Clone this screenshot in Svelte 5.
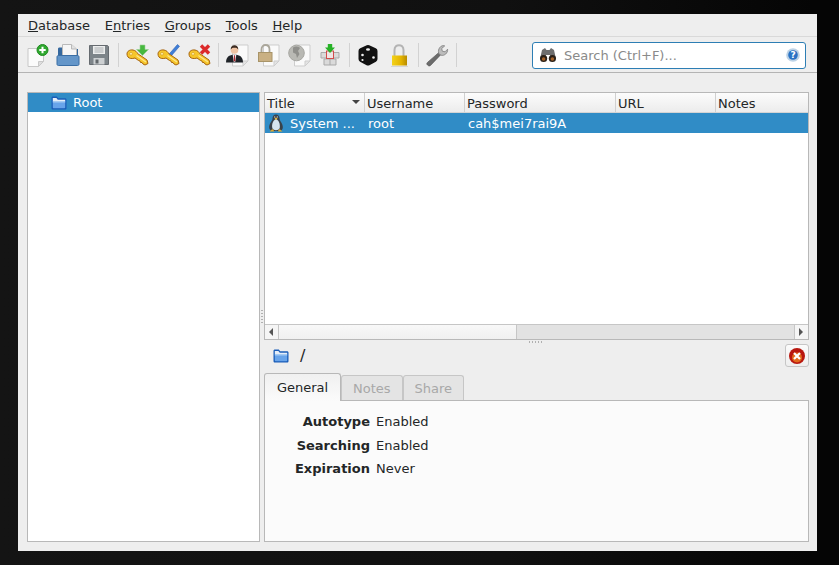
<script lang="ts">
  const menus = [
    { key: 'D', rest: 'atabase' },
    { pre: 'E', key: 'n', rest: 'tries' },
    { key: 'G', rest: 'roups' },
    { key: 'T', rest: 'ools' },
    { key: 'H', rest: 'elp' },
  ];
  const columns = [
    { name: 'Title', width: 100, sort: true },
    { name: 'Username', width: 100 },
    { name: 'Password', width: 151 },
    { name: 'URL', width: 100 },
    { name: 'Notes', width: 93 },
  ];
  const details = [
    ['Autotype', 'Enabled'],
    ['Searching', 'Enabled'],
    ['Expiration', 'Never'],
  ];
</script>

{#snippet folder()}
  <svg class="folder" viewBox="0 0 16 14" width="16" height="14">
    <path d="M.5 12V2C.5 1 1 .5 2 .5h3.800l1.400 1.700H14c1 0 1.500.5 1.500 1.500V12c0 1-.5 1.500-1.500 1.500H2C1 13.500.5 13 .5 12z" fill="#1a5db8" />
    <path d="M1.800 2h3.600l1.400 1.700h7.400v1.300H1.800z" fill="#e6eef8" />
    <path d="M1.800 5h12.400v6.500c0 .5-.3.800-.8.800H2.600c-.5 0-.8-.3-.8-.8z" fill="#68a4ea" />
    <path d="M1.800 5h12.400v1.500H1.800z" fill="#a5cbf3" />
  </svg>
{/snippet}

{#snippet key(extra)}
  <svg viewBox="0 0 24 24" width="24" height="24">
    {@render extra()}
    <path d="M2 11C2 8 5 6.500 8 7c2.500.5 4 2 4.500 3.500L22 17l1 3.500-3 1.500-2-1-1-1.500h-1.500l-.5-1.500-1.500-.5L10 15c-3 1-6 .5-7-1-.7-1-1-2-1-3z" fill="#f6c62a" stroke="#a8640c" stroke-width="1" stroke-linejoin="round" />
    <path d="M11.500 12.500l9.500 6.500" stroke="#fde78f" stroke-width="1.200" />
    <circle cx="6" cy="10.800" r="1.400" fill="#fff1a8" stroke="#c58a14" stroke-width=".5" />
  </svg>
{/snippet}

{#snippet page(inner)}
  <svg viewBox="0 0 24 24" width="24" height="24">
    <path d="M7.500 2h15.500v16l-5 5H7.500z" fill="#fafafa" stroke="#cdcdcd" />
    <path d="M23 18h-5v5z" fill="#e4e4e4" stroke="#cdcdcd" />
    {@render inner()}
  </svg>
{/snippet}

<div class="window">
  <nav class="menubar">
    {#each menus as m}
      <span class="menu">{m.pre ?? ''}<u>{m.key}</u>{m.rest}</span>
    {/each}
  </nav>

  <div class="toolbar">
    <span class="tool">
      <svg viewBox="0 0 24 24" width="24" height="24">
        <path d="M3 5.500h15.500v13l-5 5H3z" fill="#fbfbfb" stroke="#c8c8c8" />
        <path d="M18.500 18.500l-5 5v-5z" fill="#dedede" stroke="#c8c8c8" />
        <circle cx="17.500" cy="7" r="5.500" fill="#2fa82f" stroke="#1f8a1f" />
        <path d="M17.500 3.800v6.400M14.300 7h6.400" stroke="#fff" stroke-width="2" />
      </svg>
    </span>
    <span class="tool">
      <svg viewBox="0 0 24 24" width="24" height="24">
        <path d="M2 6c0-1 .6-1.500 1.500-1.500h3l1 1.500H22v13H2z" fill="#35689e" />
        <path d="M6.500 1.500h9l5 4.500v8h-14z" fill="#f6f6f6" stroke="#b9b9b9" />
        <path d="M15.500 1.500v4.500h5" fill="#e2e2e2" stroke="#b9b9b9" />
        <path d="M1 14c0-1 .6-1.500 1.500-1.500h19c.9 0 1.500.5 1.500 1.500v7c0 1-.6 1.500-1.500 1.500h-19C1.600 22.500 1 22 1 21z" fill="#6496c9" stroke="#3a6ea5" />
      </svg>
    </span>
    <span class="tool">
      <svg viewBox="0 0 24 24" width="24" height="24">
        <path d="M2.500 2.500h18l1 1v18h-19z" fill="#7d8489" stroke="#666b70" />
        <path d="M6 3h12v8H6z" fill="#eceded" />
        <path d="M7.500 5h9M7.500 7h9M7.500 9h9" stroke="#a9adb0" />
        <path d="M6.500 15h11v6.500h-11z" fill="#cdd0d2" />
        <path d="M8.500 16.500h3v4h-3z" fill="#63686c" />
      </svg>
    </span>
    <span class="sep"></span>
    <span class="tool">
      {#snippet down()}
        <path d="M15 2h5v4.500h3.500L17.500 12.500 11.500 6.500H15z" fill="#46b83f" stroke="#9bd196" stroke-width=".6" />
      {/snippet}
      {@render key(down)}
    </span>
    <span class="tool">
      {#snippet pencil()}
        <path d="M21.500 1.500l2 1.800-9 10.500-3 1.200 .8-3z" fill="#3f7ed8" stroke="#2b5fb0" stroke-width=".6" />
      {/snippet}
      {@render key(pencil)}
    </span>
    <span class="tool">
      {#snippet cross()}
        <path d="M14 2.500l8 8M22 2.500l-8 8" stroke="#dc2a2a" stroke-width="3.400" />
      {/snippet}
      {@render key(cross)}
    </span>
    <span class="sep"></span>
    <span class="tool">
      {#snippet user()}
        <circle cx="9.500" cy="7" r="3.800" fill="#eec3a3" />
        <path d="M5.700 6.500c0-3 1.800-4.300 3.800-4.300s3.800 1.300 3.800 4.300c-1-1.500-2-1.800-3.800-1.800S6.700 5 5.700 6.500z" fill="#3b2a20" />
        <path d="M1 19.500c0-5.500 3-7.800 8.500-7.800s8.500 2.300 8.500 7.800z" fill="#1f2328" />
        <path d="M7.700 11.700h3.600l-1 7h-1.600z" fill="#f4f4f4" />
        <path d="M9 12.300h1l.4 6h-1.800z" fill="#a8242c" />
      {/snippet}
      {@render page(user)}
    </span>
    <span class="tool">
      {#snippet padlock()}
        <path d="M5.500 10V6.500c0-6 8-6 8 0V10" fill="none" stroke="#aaa69a" stroke-width="1.800" />
        <rect x="2.500" y="9.500" width="13.500" height="9" fill="#c9b083" stroke="#a89468" />
      {/snippet}
      {@render page(padlock)}
    </span>
    <span class="tool">
      {#snippet globe()}
        <circle cx="9.500" cy="10" r="7.800" fill="#b9b9b4" stroke="#a8a8a3" />
        <path d="M6 4.500c3-2 6-1 7 .5l-2 3 1.500 3-2.500 4-1-4-3-1.500z" fill="#8f8f8b" />
      {/snippet}
      {@render page(globe)}
    </span>
    <span class="tool">
      <svg viewBox="0 0 24 24" width="24" height="24">
        <path d="M3 9.500h18v5.500H3zM6 16h12v6H6z" fill="#dadada" stroke="#a9a9a9" />
        <path d="M9 9.500v5.500M15 9.500v5.500M12 16v6" stroke="#a9a9a9" />
        <rect x="8.500" y="8" width="7" height="7.500" fill="#efe4e4" stroke="#d24b4b" />
        <path d="M9.800 1h4.400v3.500h2.800L12 10 7 4.500h2.800z" fill="#27b227" />
      </svg>
    </span>
    <span class="sep"></span>
    <span class="tool">
      <svg viewBox="0 0 24 24" width="24" height="24">
        <path d="M12 5l6.500 3v8L12 19.500 5.500 16V8z" fill="#121212" stroke="#121212" stroke-linejoin="round" stroke-width="6" />
        <g fill="#f2f2f2"><ellipse cx="12" cy="6.500" rx="2" ry="1.200" /><circle cx="6.500" cy="12" r="1.300" /><circle cx="6.500" cy="17" r="1.100" /><circle cx="17.500" cy="14.500" r="1.300" /></g>
      </svg>
    </span>
    <span class="tool">
      <svg viewBox="0 0 24 24" width="24" height="24">
        <defs>
          <linearGradient id="gold" x1="0" x2="1" y1="0" y2="0">
            <stop offset="0" stop-color="#f3d21a" />
            <stop offset="0.6" stop-color="#e4b400" />
            <stop offset="1" stop-color="#b88c00" />
          </linearGradient>
        </defs>
        <path d="M7.500 13V7c0-6.500 9-6.500 9 0v6" fill="none" stroke="#b4b4b4" stroke-width="2" />
        <rect x="5" y="12.500" width="15" height="10" fill="url(#gold)" />
        <rect x="4" y="23" width="17" height="1" fill="#d4d4d4" />
      </svg>
    </span>
    <span class="sep"></span>
    <span class="tool">
      <svg viewBox="0 0 24 24" width="24" height="24">
        <path d="M2.500 22c-1-1-.8-1.800 0-2.600l11.500-10 2 2-10.500 11c-1 .9-2 .6-3-.4z" fill="#6c6c6c" stroke="#565656" stroke-width=".7" />
        <path d="M14 11c-1.500-3 0-8 4.500-8.500l1.200.4-3 2.600.6 2.700 2.700.6 2.600-2.600c.4 4-3.500 7-6.500 6z" fill="#bcbcbc" stroke="#7c7c7c" stroke-width=".8" />
      </svg>
    </span>
    <span class="sep"></span>
    <label class="search">
      <svg viewBox="0 0 18 18" width="18" height="18">
        <path d="M3 4l3-2 1.500 2h3L12 2l3 2 2 9h-6V9H7v4H1z" fill="#6e6e6e" />
        <circle cx="4.600" cy="12.500" r="3.600" fill="#2b2118" />
        <circle cx="13.400" cy="12.500" r="3.600" fill="#2b2118" />
        <circle cx="4.600" cy="13" r="1.800" fill="#a4622a" />
        <circle cx="13.400" cy="13" r="1.800" fill="#a4622a" />
      </svg>
      <span class="placeholder">Search (Ctrl+F)...</span>
      <svg class="help" viewBox="0 0 14 14" width="14" height="14">
        <circle cx="7" cy="7" r="6.800" fill="#bcd2e6" />
        <circle cx="7" cy="7" r="4.800" fill="#2a72c4" />
        <text x="7" y="10.200" text-anchor="middle" font-size="9" font-weight="700" fill="#fff">?</text>
      </svg>
    </label>
  </div>

  <div class="content">
    <aside class="tree">
      <div class="tree-row">
        {@render folder()}
        <span>Root</span>
      </div>
    </aside>

    <div class="split-v"><span class="dots-v"></span></div>

    <section class="main">
      <div class="table">
        <div class="thead">
          {#each columns as c}
            <div class="th" style="width: {c.width}px">
              {c.name}
              {#if c.sort}<span class="sort"></span>{/if}
            </div>
          {/each}
        </div>
        <div class="row">
          <div class="td title" style="width: {columns[0].width}px">
            <svg viewBox="0 0 16 18" width="16" height="18">
              <path d="M8 .5c2.500 0 3.500 2 3.500 4 0 2.500 3.800 5 3.300 9.500-.2 1.500-1.500 2.500-2.500 3H3.700c-1-.5-2.300-1.500-2.500-3C.7 9.500 4.500 7 4.500 4.500 4.500 2.500 5.500.5 8 .5z" fill="#39424a" />
              <path d="M8 5c2.600 1 4.300 4.500 3.800 8.500-.2 1.800-1.800 2.800-3.800 2.800s-3.600-1-3.800-2.800C3.700 9.500 5.400 6 8 5z" fill="#d6e5ef" />
              <path d="M6.500 4.500L8 3.500l1.500 1L8 6z" fill="#e4b53a" />
              <path d="M6.200 2.500h1v1h-1zM8.800 2.500h1v1h-1z" fill="#fff" />
              <path d="M1.500 17.500l3-2.500 2 2.500zM14.500 17.500l-3-2.500-2 2.500z" fill="#e0a92c" />
            </svg>
            <span>System ...</span>
          </div>
          <div class="td" style="width: {columns[1].width}px">root</div>
          <div class="td" style="width: {columns[2].width}px">cah$mei7rai9A</div>
        </div>
        <div class="rows-empty"></div>
        <div class="hscroll">
          <span class="arrow left"></span>
          <span class="thumb"></span>
          <span class="track"></span>
          <span class="arrow right"></span>
        </div>
      </div>

      <div class="split-h"><span class="dots-h"></span></div>

      <div class="path">
        {@render folder()}
        <span class="slash">/</span>
        <button class="close" aria-label="Close">
          <svg viewBox="0 0 18 18" width="18" height="18">
            <circle cx="9" cy="9" r="8" fill="#b9170f" />
            <circle cx="9" cy="10.500" r="5" fill="#e2691b" />
            <path d="M6 6l6 6M12 6l-6 6" stroke="#fff" stroke-width="2.200" />
          </svg>
        </button>
      </div>

      <div class="tabs">
        <span class="tab active">General</span>
        <span class="tab">Notes</span>
        <span class="tab">Share</span>
      </div>
      <div class="pane">
        {#each details as [label, value]}
          <div class="detail">
            <b>{label}</b>
            <span>{value}</span>
          </div>
        {/each}
      </div>
    </section>
  </div>
</div>

<style>
  :global(body) {
    background: linear-gradient(90deg, #141414, #101010 60%, #050505 97%);
    height: 565px;
    overflow: hidden;
  }
  .window {
    box-sizing: border-box;
    width: 799px;
    height: 537px;
    margin: 14px 0 0 18px;
    display: flex;
    flex-direction: column;
    background: #eeeeee;
    color: #232627;
    font: 13px "DejaVu Sans", sans-serif;
  }
  .menubar {
    height: 22px;
    display: flex;
    align-items: center;
    gap: 14.700px;
    padding-left: 10px;
    border-bottom: 1px solid #d9d9d9;
    flex: none;
  }
  .toolbar {
    height: 35px;
    display: flex;
    align-items: center;
    padding-left: 3.500px;
    border-bottom: 1px solid #b4b4b4;
    flex: none;
  }
  .tool {
    width: 31px;
    height: 24px;
    display: flex;
    justify-content: center;
  }
  .sep {
    width: 7px;
    height: 24px;
    display: flex;
    justify-content: center;
  }
  .sep::before {
    content: '';
    width: 1px;
    background: #d2d2d2;
  }
  .search {
    box-sizing: border-box;
    width: 274px;
    height: 27px;
    margin: 1px 11px 0 auto;
    display: flex;
    align-items: center;
    gap: 7px;
    padding: 0 5px 0 6px;
    background: #fff;
    border: 1px solid #2d7eb4;
    border-radius: 3px;
  }
  .placeholder {
    color: #8a8a8a;
    flex: 1;
  }
  .content {
    flex: 1;
    min-height: 0;
    display: flex;
    padding: 19px 8px 9px 9px;
  }
  .tree {
    box-sizing: border-box;
    width: 233px;
    background: #fff;
    border: 1px solid #b8b8b8;
    flex: none;
  }
  .tree-row {
    height: 19px;
    display: flex;
    align-items: center;
    gap: 6px;
    padding-left: 23px;
    background: #308cc6;
    color: #fff;
  }
  .split-v {
    width: 4px;
    flex: none;
    display: flex;
    align-items: center;
  }
  .dots-v {
    width: 2px;
    height: 14px;
    margin-left: 1px;
    background: repeating-linear-gradient(#b0b0b0 0 1px, transparent 1px 3px);
  }
  .main {
    flex: 1;
    min-width: 0;
    display: flex;
    flex-direction: column;
  }
  .table {
    box-sizing: border-box;
    height: 248px;
    display: flex;
    flex-direction: column;
    background: #fff;
    border: 1px solid #b8b8b8;
    flex: none;
  }
  .thead {
    height: 20px;
    display: flex;
    flex: none;
    background: linear-gradient(#fcfcfc, #ececec);
    border-bottom: 1px solid #d4d4d4;
    box-sizing: border-box;
  }
  .th {
    box-sizing: border-box;
    position: relative;
    line-height: 21px;
    padding-left: 2px;
    border-right: 1px solid #d0d0d0;
    flex: none;
  }
  .th:last-child {
    border-right: 0;
  }
  .sort {
    position: absolute;
    right: 4px;
    top: 7px;
    border: 4px solid transparent;
    border-top: 4px solid #444;
    border-bottom: 0;
  }
  .row {
    height: 20px;
    display: flex;
    align-items: center;
    background: #308cc6;
    color: #fff;
    flex: none;
  }
  .td {
    box-sizing: border-box;
    padding-left: 3px;
    flex: none;
  }
  .td.title {
    display: flex;
    align-items: center;
    gap: 6px;
    padding-left: 3px;
  }
  .rows-empty {
    flex: 1;
  }
  .hscroll {
    height: 14px;
    display: flex;
    flex: none;
    border-top: 1px solid #c6c6c6;
    background: #e2e2e2;
  }
  .arrow {
    width: 14px;
    box-sizing: border-box;
    background: #f5f5f5;
    position: relative;
    flex: none;
  }
  .arrow.left {
    border-right: 1px solid #c6c6c6;
  }
  .arrow.right {
    border-left: 1px solid #c6c6c6;
  }
  .arrow::after {
    content: '';
    position: absolute;
    top: 3px;
    border: 4px solid transparent;
  }
  .arrow.left::after {
    left: 1px;
    border-right-color: #555;
    border-left: 0;
    margin-left: 3px;
  }
  .arrow.right::after {
    left: 4px;
    border-left-color: #555;
    border-right: 0;
  }
  .thumb {
    width: 237px;
    background: linear-gradient(#f8f8f8, #f0f0f0);
    border-right: 1px solid #c6c6c6;
    flex: none;
  }
  .track {
    flex: 1;
  }
  .split-h {
    height: 4px;
    flex: none;
    display: flex;
    justify-content: center;
  }
  .dots-h {
    width: 14px;
    height: 2px;
    margin-top: 1px;
    margin-left: -1px;
    background: repeating-linear-gradient(90deg, #b0b0b0 0 1px, transparent 1px 3px);
  }
  .path {
    height: 23px;
    display: flex;
    align-items: center;
    padding-left: 9px;
    flex: none;
  }
  .slash {
    margin-left: 11px;
    font-size: 16px;
  }
  .close {
    box-sizing: border-box;
    width: 24px;
    height: 23px;
    margin-left: auto;
    padding: 0;
    display: flex;
    align-items: center;
    justify-content: center;
    background: linear-gradient(#fbfbfb, #eeeeee);
    border: 1px solid #c6c6c6;
    border-radius: 3px;
  }
  .tabs {
    height: 32px;
    margin-top: 2px;
    display: flex;
    align-items: flex-end;
    flex: none;
    position: relative;
    z-index: 1;
    margin-bottom: -1px;
  }
  .tab {
    box-sizing: border-box;
    width: 61.500px;
    height: 25px;
    line-height: 25px;
    margin-bottom: 1px;
    text-align: center;
    color: #a8a8a8;
    background: #e4e4e4;
    border: 1px solid #c6c6c6;
    border-bottom: 0;
    border-radius: 3px 3px 0 0;
  }
  .tab.active {
    width: 77px;
    height: 28px;
    line-height: 28px;
    margin-bottom: 0;
    color: #232627;
    background: linear-gradient(#f0f0f0, #fbfbfb);
    border-color: #b8b8b8;
  }
  .pane {
    box-sizing: border-box;
    flex: 1;
    padding-top: 13px;
    background: #fbfbfb;
    border: 1px solid #b8b8b8;
    display: flex;
    flex-direction: column;
    gap: 7.500px;
  }
  .detail {
    height: 16px;
    line-height: 16px;
    display: flex;
    gap: 6px;
  }
  .detail b {
    width: 105px;
    text-align: right;
    font-weight: 700;
  }
</style>
